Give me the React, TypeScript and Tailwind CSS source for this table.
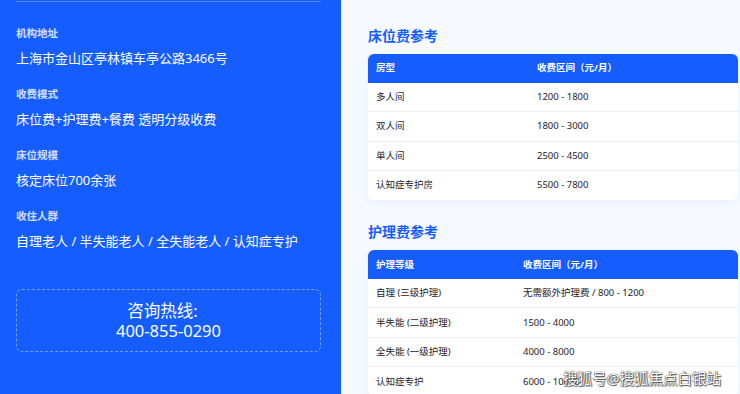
import React from 'react'

interface PriceRow {
  name: string;
  price: string;
}

const bedRows: PriceRow[] = [
  { name: '多人间', price: '1200 - 1800' },
  { name: '双人间', price: '1800 - 3000' },
  { name: '单人间', price: '2500 - 4500' },
  { name: '认知症专护房', price: '5500 - 7800' },
]

const careRows: PriceRow[] = [
  { name: '自理 (三级护理)', price: '无需额外护理费 / 800 - 1200' },
  { name: '半失能 (二级护理)', price: '1500 - 4000' },
  { name: '全失能 (一级护理)', price: '4000 - 8000' },
  { name: '认知症专护', price: '6000 - 10000' },
]

const infoItems = [
  { label: '机构地址', value: '上海市金山区亭林镇车亭公路3466号' },
  { label: '收费模式', value: '床位费+护理费+餐费 透明分级收费' },
  { label: '床位规模', value: '核定床位700余张' },
  { label: '收住人群', value: '自理老人 / 半失能老人 / 全失能老人 / 认知症专护' },
]

const PriceTable: React.FC<{ head: string; rows: PriceRow[]; firstCol: string }> = ({ head, rows, firstCol }) => (
  <div className="rounded-md bg-white shadow-[0_2px_8px_rgba(22,93,255,0.06)] overflow-hidden">
    <div className="flex h-[29px] items-center bg-[#165DFF] text-[9.5px] font-bold text-white">
      <div className={`${firstCol} pl-2`}>{head}</div>
      <div className="pl-2">收费区间（元/月）</div>
    </div>
    {rows.map((row, i) => (
      <div
        key={row.name}
        className={`flex h-[29.3px] items-center text-[9.5px] text-[#1d2129] ${i < rows.length - 1 ? 'border-b border-[#eef3fb]' : ''}`}
      >
        <div className={`${firstCol} pl-2`}>{row.name}</div>
        <div className="pl-2">{row.price}</div>
      </div>
    ))}
  </div>
)

export default function App() {
  return (
    <div
      className="flex h-[394px] w-[740px] overflow-hidden"
      style={{ fontFamily: '"Noto Sans", "Noto Sans CJK SC", sans-serif' }}
    >
      <div className="flex w-[341px] shrink-0 flex-col bg-[#165DFF] pl-4 pr-5 text-white">
        <div className="mt-px border-t border-white/25" />
        <div className="mt-6 flex flex-col gap-[19px]">
          {infoItems.map(item => (
            <div key={item.label}>
              <div className="text-[10.5px] font-bold leading-[15px] text-white/80">{item.label}</div>
              <div className="mt-[7px] text-[13px] leading-5">{item.value}</div>
            </div>
          ))}
        </div>
        <div className="mt-[38px] flex h-[63px] flex-col items-center justify-center rounded-md border border-dashed border-white/40 text-[16.5px] leading-5">
          <div className="pr-[12px]">咨询热线:</div>
          <div>400-855-0290</div>
        </div>
      </div>
      <div className="flex-1 bg-[#F6F9FF] pl-[27px] pr-[2px] pt-[26px]">
        <h2 className="mb-2 text-[14px] font-bold leading-5 text-[#165DFF]">床位费参考</h2>
        <PriceTable head="房型" rows={bedRows} firstCol="w-[161px]" />
        <h2 className="mb-2 mt-[22px] text-[14px] font-bold leading-5 text-[#165DFF]">护理费参考</h2>
        <div className="relative">
          <PriceTable head="护理等级" rows={careRows} firstCol="w-[147px]" />
          <div
            className="absolute left-[195px] top-[118px] whitespace-nowrap text-[14.5px] text-white"
            style={{ textShadow: '0 0 1px #333, 0 0 1px #333, 1px 1px 1px #555' }}
          >
            搜狐号@搜狐焦点白银站
          </div>
        </div>
      </div>
    </div>
  )
}
